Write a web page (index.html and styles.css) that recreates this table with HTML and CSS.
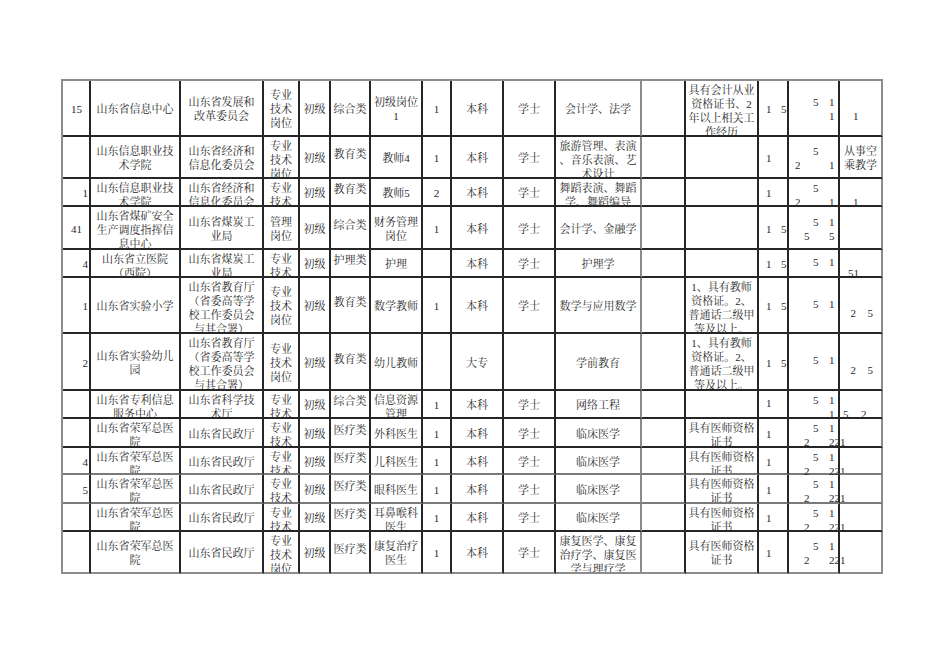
FILE: index.html
```html
<!DOCTYPE html>
<html lang="zh">
<head>
<meta charset="utf-8">
<title>岗位表</title>
<link rel="stylesheet" href="styles.css">
</head>
<body>
<main class="page">
  <div class="sheet">
    <div class="row">
      <div class="c num two">15</div>
      <div class="c">山东省信息中心</div>
      <div class="c">山东省发展和<br>改革委员会</div>
      <div class="c">专业<br>技术<br>岗位</div>
      <div class="c">初级</div>
      <div class="c">综合类</div>
      <div class="c">初级岗位<br>1</div>
      <div class="c">1</div>
      <div class="c">本科</div>
      <div class="c">学士</div>
      <div class="c">会计学、法学</div>
      <div class="c"></div>
      <div class="c">具有会计从业<br>资格证书、2<br>年以上相关工<br>作经历</div>
      <div class="c nc"><div class="nums"><div><span class="m7">1</span><span class="m9">5</span></div></div></div>
      <div class="c nc"><div class="nums"><div><span class="m24">5</span><span class="m10">1</span></div><div><span class="m40">1</span></div></div></div>
      <div class="c nc"><div class="nums"><div>&nbsp;</div><div><span class="m13">1</span></div></div></div>
    </div>
    <div class="row">
      <div class="c num"></div>
      <div class="c">山东信息职业技<br>术学院</div>
      <div class="c">山东省经济和<br>信息化委员会</div>
      <div class="c">专业<br>技术<br>岗位</div>
      <div class="c">初级</div>
      <div class="c cat">教育类</div>
      <div class="c">教师4</div>
      <div class="c">1</div>
      <div class="c">本科</div>
      <div class="c">学士</div>
      <div class="c">旅游管理、表演<br>、音乐表演、艺<br>术设计</div>
      <div class="c"></div>
      <div class="c"></div>
      <div class="c nc"><div class="nums"><div><span class="m7">1</span></div></div></div>
      <div class="c nc"><div class="nums"><div><span class="m24">5</span></div><div><span class="m6">2</span><span class="m28">1</span></div></div></div>
      <div class="c">从事空<br>乘教学</div>
    </div>
    <div class="row">
      <div class="c num">1</div>
      <div class="c">山东信息职业技<br>术学院</div>
      <div class="c">山东省经济和<br>信息化委员会</div>
      <div class="c">专业<br>技术</div>
      <div class="c">初级</div>
      <div class="c cat">教育类</div>
      <div class="c">教师5</div>
      <div class="c">2</div>
      <div class="c">本科</div>
      <div class="c">学士</div>
      <div class="c">舞蹈表演、舞蹈<br>学、舞蹈编导</div>
      <div class="c"></div>
      <div class="c"></div>
      <div class="c nc"><div class="nums"><div><span class="m7">1</span></div></div></div>
      <div class="c nc"><div class="nums"><div><span class="m24">5</span></div><div><span class="m6">2</span><span class="m28">1</span></div></div></div>
      <div class="c nc"><div class="nums"><div>&nbsp;</div><div><span class="m13">1</span></div></div></div>
    </div>
    <div class="row">
      <div class="c num two">41</div>
      <div class="c">山东省煤矿安全<br>生产调度指挥信<br>息中心</div>
      <div class="c">山东省煤炭工<br>业局</div>
      <div class="c">管理<br>岗位</div>
      <div class="c">初级</div>
      <div class="c cat">综合类</div>
      <div class="c">财务管理<br>岗位</div>
      <div class="c">1</div>
      <div class="c">本科</div>
      <div class="c">学士</div>
      <div class="c">会计学、金融学</div>
      <div class="c"></div>
      <div class="c"></div>
      <div class="c nc"><div class="nums"><div><span class="m7">1</span><span class="m9">5</span></div></div></div>
      <div class="c nc"><div class="nums"><div><span class="m24">5</span><span class="m10">1</span></div><div><span class="m15">5</span><span class="m19">5</span></div></div></div>
      <div class="c"></div>
    </div>
    <div class="row">
      <div class="c num">4</div>
      <div class="c">山东省立医院<br>（西院）</div>
      <div class="c">山东省煤炭工<br>业局</div>
      <div class="c">专业<br>技术</div>
      <div class="c">初级</div>
      <div class="c cat">护理类</div>
      <div class="c">护理</div>
      <div class="c"></div>
      <div class="c">本科</div>
      <div class="c">学士</div>
      <div class="c">护理学</div>
      <div class="c"></div>
      <div class="c"></div>
      <div class="c nc"><div class="nums"><div><span class="m7">1</span><span class="m9">5</span></div></div></div>
      <div class="c nc"><div class="nums up"><div><span class="m24">5</span><span class="m10">1</span></div></div></div>
      <div class="c nc"><div class="nums"><div>&nbsp;</div><div><span class="m8">51</span></div></div></div>
    </div>
    <div class="row">
      <div class="c num">1</div>
      <div class="c">山东省实验小学</div>
      <div class="c">山东省教育厅<br>（省委高等学<br>校工作委员会<br>与其合署）</div>
      <div class="c">专业<br>技术<br>岗位</div>
      <div class="c">初级</div>
      <div class="c cat">教育类</div>
      <div class="c">数学教师</div>
      <div class="c">1</div>
      <div class="c">本科</div>
      <div class="c">学士</div>
      <div class="c">数学与应用数学</div>
      <div class="c"></div>
      <div class="c">1、具有教师<br>资格证。2、<br>普通话二级甲<br>等及以上。</div>
      <div class="c nc"><div class="nums"><div><span class="m7">1</span><span class="m9">5</span></div></div></div>
      <div class="c nc"><div class="nums up"><div><span class="m24">5</span><span class="m10">1</span></div></div></div>
      <div class="c nc"><div class="nums"><div>&nbsp;</div><div><span class="m10">2</span><span class="m11">5</span></div></div></div>
    </div>
    <div class="row">
      <div class="c num">2</div>
      <div class="c">山东省实验幼儿<br>园</div>
      <div class="c">山东省教育厅<br>（省委高等学<br>校工作委员会<br>与其合署）</div>
      <div class="c">专业<br>技术<br>岗位</div>
      <div class="c">初级</div>
      <div class="c cat">教育类</div>
      <div class="c">幼儿教师</div>
      <div class="c"></div>
      <div class="c">大专</div>
      <div class="c"></div>
      <div class="c">学前教育</div>
      <div class="c"></div>
      <div class="c">1、具有教师<br>资格证。2、<br>普通话二级甲<br>等及以上。</div>
      <div class="c nc"><div class="nums"><div><span class="m7">1</span><span class="m9">5</span></div></div></div>
      <div class="c nc"><div class="nums up"><div><span class="m24">5</span><span class="m10">1</span></div></div></div>
      <div class="c nc"><div class="nums"><div>&nbsp;</div><div><span class="m10">2</span><span class="m11">5</span></div></div></div>
    </div>
    <div class="row">
      <div class="c num"></div>
      <div class="c">山东省专利信息<br>服务中心</div>
      <div class="c">山东省科学技<br>术厅</div>
      <div class="c">专业<br>技术</div>
      <div class="c">初级</div>
      <div class="c cat">综合类</div>
      <div class="c">信息资源<br>管理</div>
      <div class="c">1</div>
      <div class="c">本科</div>
      <div class="c">学士</div>
      <div class="c">网络工程</div>
      <div class="c"></div>
      <div class="c"></div>
      <div class="c nc"><div class="nums up"><div><span class="m7">1</span></div></div></div>
      <div class="c nc"><div class="nums"><div><span class="m24">5</span><span class="m10">1</span></div><div><span class="m40">1</span></div></div></div>
      <div class="c nc"><div class="nums"><div>&nbsp;</div><div><span class="m3">5</span><span class="m12">2</span></div></div></div>
    </div>
    <div class="row">
      <div class="c num"></div>
      <div class="c">山东省荣军总医<br>院</div>
      <div class="c">山东省民政厅</div>
      <div class="c">专业<br>技术</div>
      <div class="c">初级</div>
      <div class="c cat">医疗类</div>
      <div class="c">外科医生</div>
      <div class="c">1</div>
      <div class="c">本科</div>
      <div class="c">学士</div>
      <div class="c">临床医学</div>
      <div class="c"></div>
      <div class="c">具有医师资格<br>证书</div>
      <div class="c nc"><div class="nums"><div><span class="m7">1</span></div></div></div>
      <div class="c nc spill"><div class="nums"><div><span class="m24">5</span><span class="m10">1</span></div><div><span class="m15">2</span><span class="m19">221</span></div></div></div>
      <div class="c"></div>
    </div>
    <div class="row soft">
      <div class="c num">4</div>
      <div class="c">山东省荣军总医<br>院</div>
      <div class="c">山东省民政厅</div>
      <div class="c">专业<br>技术</div>
      <div class="c">初级</div>
      <div class="c cat">医疗类</div>
      <div class="c">儿科医生</div>
      <div class="c">1</div>
      <div class="c">本科</div>
      <div class="c">学士</div>
      <div class="c">临床医学</div>
      <div class="c"></div>
      <div class="c">具有医师资格<br>证书</div>
      <div class="c nc"><div class="nums"><div><span class="m7">1</span></div></div></div>
      <div class="c nc spill"><div class="nums"><div><span class="m24">5</span><span class="m10">1</span></div><div><span class="m15">2</span><span class="m19">221</span></div></div></div>
      <div class="c"></div>
    </div>
    <div class="row soft">
      <div class="c num">5</div>
      <div class="c">山东省荣军总医<br>院</div>
      <div class="c">山东省民政厅</div>
      <div class="c">专业<br>技术</div>
      <div class="c">初级</div>
      <div class="c cat">医疗类</div>
      <div class="c">眼科医生</div>
      <div class="c">1</div>
      <div class="c">本科</div>
      <div class="c">学士</div>
      <div class="c">临床医学</div>
      <div class="c"></div>
      <div class="c">具有医师资格<br>证书</div>
      <div class="c nc"><div class="nums"><div><span class="m7">1</span></div></div></div>
      <div class="c nc spill"><div class="nums"><div><span class="m24">5</span><span class="m10">1</span></div><div><span class="m15">2</span><span class="m19">221</span></div></div></div>
      <div class="c"></div>
    </div>
    <div class="row">
      <div class="c num"></div>
      <div class="c">山东省荣军总医<br>院</div>
      <div class="c">山东省民政厅</div>
      <div class="c">专业<br>技术</div>
      <div class="c">初级</div>
      <div class="c cat">医疗类</div>
      <div class="c">耳鼻喉科<br>医生</div>
      <div class="c">1</div>
      <div class="c">本科</div>
      <div class="c">学士</div>
      <div class="c">临床医学</div>
      <div class="c"></div>
      <div class="c">具有医师资格<br>证书</div>
      <div class="c nc"><div class="nums"><div><span class="m7">1</span></div></div></div>
      <div class="c nc spill"><div class="nums"><div><span class="m24">5</span><span class="m10">1</span></div><div><span class="m15">2</span><span class="m19">221</span></div></div></div>
      <div class="c"></div>
    </div>
    <div class="row">
      <div class="c num"></div>
      <div class="c">山东省荣军总医<br>院</div>
      <div class="c">山东省民政厅</div>
      <div class="c">专业<br>技术<br>岗位</div>
      <div class="c">初级</div>
      <div class="c cat">医疗类</div>
      <div class="c">康复治疗<br>医生</div>
      <div class="c">1</div>
      <div class="c">本科</div>
      <div class="c">学士</div>
      <div class="c">康复医学、康复<br>治疗学、康复医<br>学与理疗学</div>
      <div class="c"></div>
      <div class="c">具有医师资格<br>证书</div>
      <div class="c nc"><div class="nums"><div><span class="m7">1</span></div></div></div>
      <div class="c nc spill"><div class="nums"><div><span class="m24">5</span><span class="m10">1</span></div><div><span class="m15">2</span><span class="m19">221</span></div></div></div>
      <div class="c"></div>
    </div>
  </div>
</main>
</body>
</html>
```
FILE: styles.css
```css
html, body {
  margin: 0;
  padding: 0;
  background: #ffffff;
}

body {
  font-family: "Liberation Serif", "Noto Serif CJK SC", "Noto Sans CJK SC", serif;
  font-size: 11px;
  line-height: 14px;
  color: #2a2a2a;
}

.page {
  padding: 79px 0 0 61px;
}

.sheet {
  display: grid;
  width: max-content;
  grid-template-columns: 28px 90px 83px 36px 31px 40px 52px 29px 52px 52px 86px 44px 73px 30px 51px 43px;
  grid-template-rows: 56px 42px 28px 43px 28px 56px 57px 28px 29px 27px 29px 28px 42px;
  border-left: 2px solid #8c8c8c;
  border-top: 2px solid #8c8c8c;
}

.row {
  display: contents;
}

.c {
  box-sizing: border-box;
  display: flex;
  align-items: safe center;
  justify-content: center;
  text-align: center;
  overflow: hidden;
  padding-top: 2px;
  white-space: nowrap;
  border-right: 2px solid #262626;
  border-bottom: 2px solid #262626;
}

.row.soft > .c {
  border-bottom-color: #7a7a7a;
}

.row > .c:nth-child(11) {
  border-right-color: #8c8c8c;
}

.row > .c:last-child {
  border-right-color: #8c8c8c;
}

.row:last-child > .c {
  border-bottom-color: #8c8c8c;
}

.num {
  justify-content: flex-end;
  padding-right: 1px;
}

.num.two {
  padding-right: 7px;
}

.cat {
  padding-bottom: 8px;
}

.nc {
  justify-content: flex-start;
  text-align: left;
}

.spill {
  overflow: visible;
}

.nums {
  display: flex;
  flex-direction: column;
}

.nums.up {
  padding-bottom: 5px;
}

.m3 { margin-left: 3px; }
.m6 { margin-left: 6px; }
.m7 { margin-left: 7px; }
.m8 { margin-left: 8px; }
.m9 { margin-left: 9.5px; }
.m10 { margin-left: 10.5px; }
.m11 { margin-left: 11.5px; }
.m12 { margin-left: 12.5px; }
.m13 { margin-left: 13px; }
.m15 { margin-left: 15px; }
.m19 { margin-left: 19.5px; }
.m24 { margin-left: 24px; }
.m28 { margin-left: 28.5px; }
.m40 { margin-left: 40px; }
```
